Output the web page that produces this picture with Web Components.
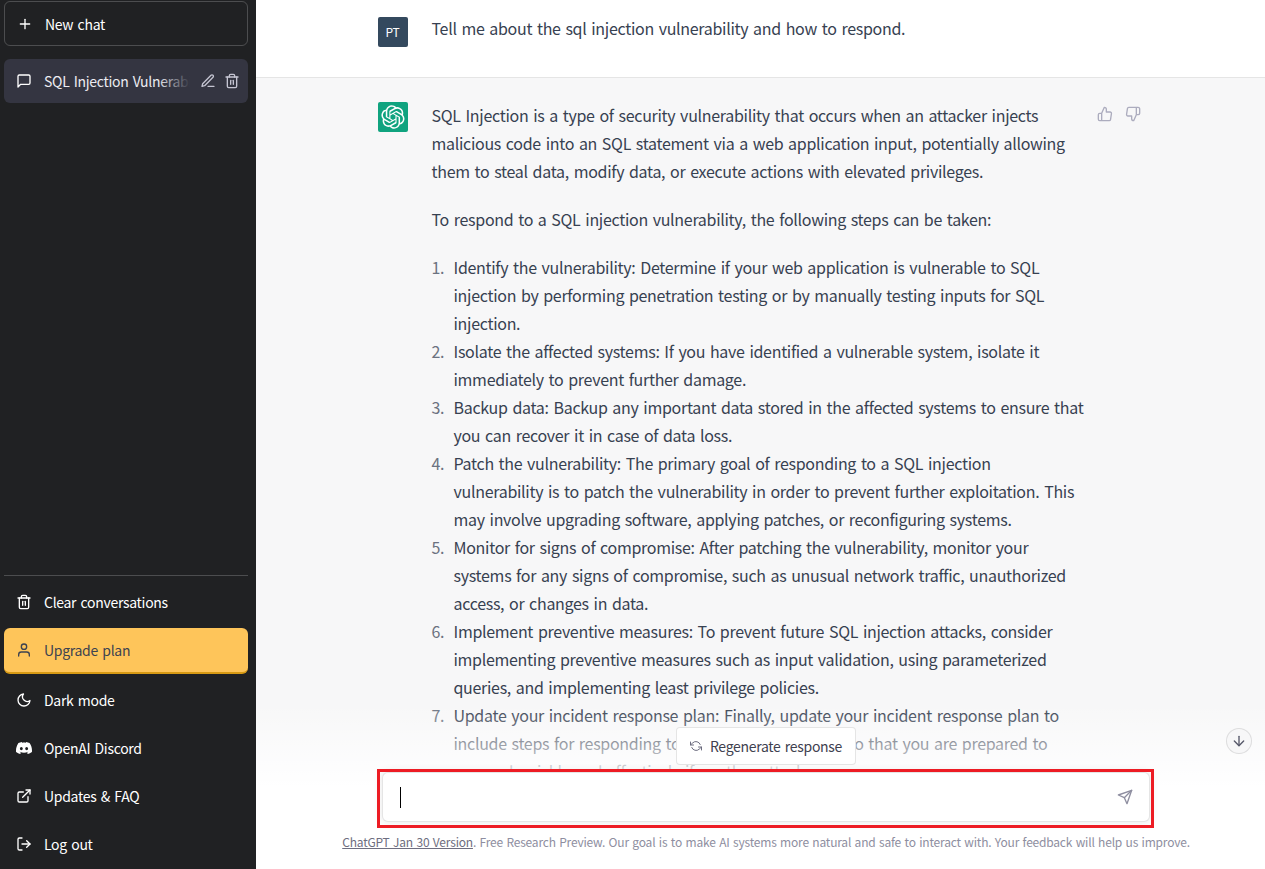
<!DOCTYPE html>
<html lang="en"><head><meta charset="utf-8"><title>ChatGPT</title>
<style>
html,body{margin:0;height:100%;overflow:hidden;background:#fff}
body{font-family:"Noto Sans CJK KR","Noto Sans",sans-serif;letter-spacing:-.3px;word-spacing:1.5px}
app-shell{height:869px}
</style></head><body>
<app-shell>
  <side-bar slot="side">
    <side-new></side-new>
    <side-chat>SQL Injection Vulnerability</side-chat>
    <side-spacer></side-spacer>
    <side-item icon="trash">Clear conversations</side-item>
    <side-item icon="user" variant="gold">Upgrade plan</side-item>
    <side-item icon="moon">Dark mode</side-item>
    <side-item icon="discord">OpenAI Discord</side-item>
    <side-item icon="link">Updates &amp; FAQ</side-item>
    <side-item icon="logout">Log out</side-item>
  </side-bar>
  <chat-main slot="main">
    <chat-msg who="user">Tell me about the sql injection vulnerability and how to respond.</chat-msg>
    <chat-msg who="bot">
      <p>SQL Injection is a type of security vulnerability that occurs when an attacker injects malicious code into an SQL statement via a web application input, potentially allowing them to steal data, modify data, or execute actions with elevated privileges.</p>
      <p>To respond to a SQL injection vulnerability, the following steps can be taken:</p>
      <step-item n="1">Identify the vulnerability: Determine if your web application is vulnerable to SQL injection by performing penetration testing or by manually testing inputs for SQL injection.</step-item>
      <step-item n="2">Isolate the affected systems: If you have identified a vulnerable system, isolate it immediately to prevent further damage.</step-item>
      <step-item n="3">Backup data: Backup any important data stored in the affected systems to ensure that you can recover it in case of data loss.</step-item>
      <step-item n="4">Patch the vulnerability: The primary goal of responding to a SQL injection<br>vulnerability is to patch the vulnerability in order to prevent further exploitation. This may involve upgrading software, applying patches, or reconfiguring systems.</step-item>
      <step-item n="5">Monitor for signs of compromise: After patching the vulnerability, monitor your systems for any signs of compromise, such as unusual network traffic, unauthorized access, or changes in data.</step-item>
      <step-item n="6">Implement preventive measures: To prevent future SQL injection attacks, consider implementing preventive measures such as input validation, using parameterized queries, and implementing least privilege policies.</step-item>
      <step-item n="7">Update your incident response plan: Finally, update your incident response plan to include steps for responding to SQL injection attacks, so that you are prepared to respond quickly and effectively if another attack occurs.</step-item>
    </chat-msg>
  </chat-main>
</app-shell>
<script>
const S=(inner,size=16,extra='')=>`<svg viewBox="0 0 24 24" width="${size}" height="${size}" fill="none" stroke="currentColor" stroke-width="2" stroke-linecap="round" stroke-linejoin="round" ${extra}>${inner}</svg>`;
const ICONS={
 plus:'<line x1="12" y1="5" x2="12" y2="19"/><line x1="5" y1="12" x2="19" y2="12"/>',
 msg:'<path d="M21 15a2 2 0 0 1-2 2H7l-4 4V5a2 2 0 0 1 2-2h14a2 2 0 0 1 2 2z"/>',
 edit:'<path d="M12 20h9"/><path d="M16.5 3.5a2.121 2.121 0 0 1 3 3L7 19l-4 1 1-4L16.5 3.5z"/>',
 trash:'<polyline points="3 6 5 6 21 6"/><path d="M19 6v14a2 2 0 0 1-2 2H7a2 2 0 0 1-2-2V6m3 0V4a2 2 0 0 1 2-2h4a2 2 0 0 1 2 2v2"/><line x1="10" y1="11" x2="10" y2="17"/><line x1="14" y1="11" x2="14" y2="17"/>',
 user:'<path d="M20 21v-2a4 4 0 0 0-4-4H8a4 4 0 0 0-4 4v2"/><circle cx="12" cy="7" r="4"/>',
 moon:'<path d="M21 12.79A9 9 0 1 1 11.21 3 7 7 0 0 0 21 12.79z"/>',
 link:'<path d="M18 13v6a2 2 0 0 1-2 2H5a2 2 0 0 1-2-2V8a2 2 0 0 1 2-2h6"/><polyline points="15 3 21 3 21 9"/><line x1="10" y1="14" x2="21" y2="3"/>',
 logout:'<path d="M9 21H5a2 2 0 0 1-2-2V5a2 2 0 0 1 2-2h4"/><polyline points="16 17 21 12 16 7"/><line x1="21" y1="12" x2="9" y2="12"/>',
 discord:'<path fill="currentColor" stroke="none" d="M20.317 4.3698a19.7913 19.7913 0 00-4.8851-1.5152.0741.0741 0 00-.0785.0371c-.211.3753-.4447.8648-.6083 1.2495-1.8447-.2762-3.68-.2762-5.4868 0-.1636-.3933-.4058-.8742-.6177-1.2495a.077.077 0 00-.0785-.037 19.7363 19.7363 0 00-4.8852 1.515.0699.0699 0 00-.0321.0277C.5334 9.0458-.319 13.5799.0992 18.0578a.0824.0824 0 00.0312.0561c2.0528 1.5076 4.0413 2.4228 5.9929 3.0294a.0777.0777 0 00.0842-.0276c.4616-.6304.8731-1.2952 1.226-1.9942a.076.076 0 00-.0416-.1057c-.6528-.2476-1.2743-.5495-1.8722-.8923a.077.077 0 01-.0076-.1277c.1258-.0943.2517-.1923.3718-.2914a.0743.0743 0 01.0776-.0105c3.9278 1.7933 8.18 1.7933 12.0614 0a.0739.0739 0 01.0785.0095c.1202.099.246.1981.3728.2924a.077.077 0 01-.0066.1276 12.2986 12.2986 0 01-1.873.8914.0766.0766 0 00-.0407.1067c.3604.698.7719 1.3628 1.225 1.9932a.076.076 0 00.0842.0286c1.961-.6067 3.9495-1.5219 6.0023-3.0294a.077.077 0 00.0313-.0552c.5004-5.177-.8382-9.6739-3.5485-13.6604a.061.061 0 00-.0312-.0286zM8.02 15.3312c-1.1825 0-2.1569-1.0857-2.1569-2.419 0-1.3332.9555-2.4189 2.157-2.4189 1.2108 0 2.1757 1.0952 2.1568 2.419 0 1.3332-.9555 2.4189-2.1569 2.4189zm7.9748 0c-1.1825 0-2.1569-1.0857-2.1569-2.419 0-1.3332.9554-2.4189 2.1569-2.4189 1.2108 0 2.1757 1.0952 2.1568 2.419 0 1.3332-.946 2.4189-2.1568 2.4189Z"/>',
 up:'<path d="M14 9V5a3 3 0 0 0-3-3l-4 9v11h11.28a2 2 0 0 0 2-1.7l1.38-9a2 2 0 0 0-2-2.3zM7 22H4a2 2 0 0 1-2-2v-7a2 2 0 0 1 2-2h3"/>',
 down:'<path d="M10 15v4a3 3 0 0 0 3 3l4-9V2H5.72a2 2 0 0 0-2 1.7l-1.38 9a2 2 0 0 0 2 2.3zm7-13h2.67A2.31 2.31 0 0 1 22 4v7a2.31 2.31 0 0 1-2.33 2H17"/>',
 refresh:'<polyline points="1 4 1 10 7 10"/><polyline points="23 20 23 14 17 14"/><path d="M20.49 9A9 9 0 0 0 5.64 5.64L1 10m22 4l-4.64 4.36A9 9 0 0 1 3.51 15"/>',
 send:'<line x1="22" y1="2" x2="11" y2="13"/><polygon points="22 2 15 22 11 13 2 9 22 2"/>',
 arrow:'<line x1="12" y1="5" x2="12" y2="19"/><polyline points="19 12 12 19 5 12"/>'
};
const LOGO='M37.5324 16.8707C37.9808 15.5241 38.1363 14.0974 37.9886 12.6859C37.8409 11.2744 37.3934 9.91076 36.676 8.68622C35.6126 6.83404 33.9882 5.3676 32.0373 4.4985C30.0864 3.62941 27.9098 3.40259 25.8215 3.85078C24.8796 2.7893 23.7219 1.94125 22.4257 1.36341C21.1295 0.785575 19.7249 0.491269 18.3058 0.500197C16.1708 0.495044 14.0893 1.16803 12.3614 2.42214C10.6335 3.67624 9.34853 5.44666 8.6917 7.47815C7.30085 7.76286 5.98686 8.3414 4.8377 9.17505C3.68854 10.0087 2.73073 11.0782 2.02839 12.312C0.956464 14.1591 0.498905 16.2988 0.721698 18.4228C0.944492 20.5467 1.83612 22.5449 3.268 24.1293C2.81966 25.4759 2.66413 26.9026 2.81182 28.3141C2.95951 29.7256 3.40701 31.0892 4.12437 32.3138C5.18791 34.1659 6.8123 35.6322 8.76321 36.5013C10.7141 37.3704 12.8907 37.5973 14.9789 37.1492C15.9208 38.2107 17.0786 39.0587 18.3747 39.6366C19.6709 40.2144 21.0755 40.5087 22.4946 40.4998C24.6307 40.5054 26.7133 39.8321 28.4418 38.5772C30.1704 37.3223 31.4556 35.5506 32.1119 33.5179C33.5027 33.2332 34.8167 32.6547 35.9659 31.821C37.115 30.9874 38.0728 29.9178 38.7752 28.684C39.8458 26.8371 40.3023 24.6979 40.0789 22.5748C39.8556 20.4517 38.9639 18.4544 37.5324 16.8707ZM22.4978 37.8849C20.7443 37.8874 19.0459 37.2733 17.6994 36.1501C17.7601 36.117 17.8666 36.0586 17.936 36.0161L25.9004 31.4156C26.1003 31.3019 26.2663 31.137 26.3813 30.9378C26.4964 30.7386 26.5563 30.5124 26.5549 30.2825V19.0542L29.9213 20.998C29.9389 21.0068 29.9541 21.0198 29.9656 21.0359C29.977 21.052 29.9842 21.0707 29.9867 21.0902V30.3889C29.9842 32.375 29.1946 34.2791 27.7909 35.6841C26.3872 37.0892 24.4838 37.8806 22.4978 37.8849ZM6.39227 31.0064C5.51397 29.4888 5.19742 27.7107 5.49804 25.9832C5.55718 26.0187 5.66048 26.0818 5.73461 26.1244L13.699 30.7248C13.8975 30.8408 14.1233 30.902 14.3532 30.902C14.583 30.902 14.8088 30.8408 15.0073 30.7248L24.731 25.1103V28.9979C24.7321 29.0177 24.7283 29.0376 24.7199 29.0556C24.7115 29.0736 24.6988 29.0893 24.6829 29.1012L16.6317 33.7497C14.9096 34.7416 12.8643 35.0097 10.9447 34.4954C9.02506 33.9811 7.38785 32.7263 6.39227 31.0064ZM4.29707 13.6194C5.17156 12.0998 6.55279 10.9364 8.19885 10.3327C8.19885 10.4013 8.19491 10.5228 8.19491 10.6071V19.808C8.19351 20.0378 8.25334 20.2638 8.36823 20.4629C8.48312 20.6619 8.64893 20.8267 8.84863 20.9404L18.5723 26.5542L15.206 28.4979C15.1894 28.5089 15.1703 28.5155 15.1505 28.5173C15.1307 28.5191 15.1107 28.516 15.0924 28.5082L7.04046 23.8557C5.32135 22.8601 4.06716 21.2235 3.55289 19.3046C3.03862 17.3858 3.30624 15.3413 4.29707 13.6194ZM31.955 20.0556L22.2312 14.4411L25.5976 12.4981C25.6142 12.4872 25.6333 12.4805 25.6531 12.4787C25.6729 12.4769 25.6928 12.4801 25.7111 12.4879L33.7631 17.1364C34.9967 17.849 36.0017 18.8982 36.6606 20.1613C37.3194 21.4244 37.6047 22.849 37.4832 24.2684C37.3617 25.6878 36.8382 27.0432 35.9743 28.1759C35.1103 29.3086 33.9415 30.1717 32.6047 30.6641C32.6047 30.5947 32.6047 30.4733 32.6047 30.3889V21.188C32.6066 20.9586 32.5474 20.7328 32.4332 20.5338C32.319 20.3348 32.154 20.1698 31.955 20.0556ZM35.3055 15.0128C35.2464 14.9765 35.1431 14.9142 35.069 14.8717L27.1045 10.2712C26.906 10.1554 26.6803 10.0943 26.4504 10.0943C26.2206 10.0943 25.9948 10.1554 25.7963 10.2712L16.0726 15.8858V11.9982C16.0715 11.9783 16.0753 11.9585 16.0837 11.9405C16.0921 11.9225 16.1048 11.9068 16.1207 11.8949L24.1719 7.25025C25.4053 6.53903 26.8121 6.19376 28.2308 6.25482C29.6496 6.31589 31.0213 6.78077 32.1856 7.59508C33.3499 8.40939 34.2584 9.53945 34.8048 10.8498C35.3513 12.1602 35.5131 13.5971 35.2713 14.9965L35.3055 15.0128ZM14.2424 21.9419L10.8752 19.9981C10.8576 19.9893 10.8423 19.9763 10.8309 19.9602C10.8195 19.9441 10.8122 19.9254 10.8098 19.9058V10.6071C10.8107 9.18295 11.2173 7.78848 11.9819 6.58696C12.7466 5.38544 13.8377 4.42659 15.1275 3.82264C16.4173 3.21869 17.8524 2.99464 19.2649 3.1767C20.6775 3.35876 22.0089 3.93941 23.1034 4.85067C23.0427 4.88379 22.937 4.94215 22.8668 4.98473L14.9024 9.58517C14.7025 9.69878 14.5366 9.86356 14.4215 10.0626C14.3065 10.2616 14.2466 10.4877 14.2479 10.7175L14.2424 21.9419ZM16.071 17.9991L20.4018 15.4978L24.7325 17.9975V22.9985L20.4018 25.4983L16.071 22.9985V17.9991Z';
const def=(name,css,html)=>{
 customElements.define(name,class extends HTMLElement{
  constructor(){super();this.attachShadow({mode:'open'})}
  connectedCallback(){this.shadowRoot.innerHTML=`<style>${css}</style>`+(typeof html==='function'?html(this):html)}
 });
};
def('app-shell',':host{display:flex;width:100%;overflow:hidden;position:relative}','<slot name="side"></slot><slot name="main"></slot>');
def('side-bar',':host{display:flex;flex-direction:column;width:256px;flex:none;height:869px;box-sizing:border-box;background:#202123;padding:1px 8px 2px 4px;color:#fff;font-size:14px}','<slot></slot>');
def('side-new',':host{display:flex;align-items:center;gap:12px;height:45px;box-sizing:border-box;border:1px solid rgba(255,255,255,.2);border-radius:6px;padding-left:12px;padding-top:1px;margin-bottom:13px;flex:none}svg{display:block}',()=>S(ICONS.plus)+'<span>New chat</span>');
def('side-chat',':host{display:flex;align-items:center;height:44px;box-sizing:border-box;background:#343541;border-radius:6px;padding-left:12px;position:relative;flex:none}svg{display:block;flex:none}.t{margin-left:12px;width:146px;white-space:nowrap;overflow:hidden;position:relative;color:#ececf1}.t::after{content:"";position:absolute;right:0;top:0;bottom:0;width:32px;background:linear-gradient(to left,#343541,rgba(52,53,65,0))}.a{display:flex;gap:8px;margin-left:10px;color:#c5c5d2}',()=>S(ICONS.msg)+'<div class="t"><slot></slot></div><div class="a">'+S(ICONS.edit)+S(ICONS.trash)+'</div>');
def('side-spacer',':host{display:block;flex:1;border-bottom:1px solid rgba(255,255,255,.2)}','');
customElements.define('side-item',class extends HTMLElement{
 constructor(){super();this.attachShadow({mode:'open'})}
 connectedCallback(){
  const gold=this.getAttribute('variant')==='gold';
  const ic=this.getAttribute('icon');
  const mt=ic==='trash'?5:gold?3:ic==='moon'?5:4;
  this.shadowRoot.innerHTML=`<style>:host{display:flex;align-items:center;gap:12px;height:${gold?46:44}px;box-sizing:border-box;padding-left:12px;border-radius:6px;flex:none;margin-top:${mt}px;${gold?'background:#fec55a;border-bottom:2px solid #d79a14;color:#3d4350;':'color:#fff;padding-bottom:2px;'}}svg{display:block;flex:none}</style>${S(ICONS[ic])}<span><slot></slot></span>`;
 }
});
customElements.define('step-item',class extends HTMLElement{
 constructor(){super();this.attachShadow({mode:'open'})}
 connectedCallback(){
  this.shadowRoot.innerHTML=`<style>:host{display:grid;grid-template-columns:22px 1fr}.n{color:#6b7280}</style><span class="n">${this.getAttribute('n')}.</span><span><slot></slot></span>`;
 }
});
def('chat-main',':host{display:block;flex:1;height:869px;position:relative;overflow:hidden;background:#fff}',()=>`<style>
.fade{position:absolute;left:0;right:0;bottom:0;height:165px;background:linear-gradient(to top,#fff 0,#fff 50%,rgba(255,255,255,0) 100%);pointer-events:none}
.regen{position:absolute;left:420px;top:727px;width:180px;height:38px;box-sizing:border-box;display:flex;align-items:center;justify-content:center;gap:8px;background:#fff;border:1px solid rgba(0,0,0,.1);border-radius:4px;font-size:14px;color:#40414f}
.regen svg{color:#6e6e80}
.input{position:absolute;left:126px;top:772px;width:768px;height:50px;box-sizing:border-box;background:#fff;border:1px solid rgba(0,0,0,.1);border-radius:6px;box-shadow:0 0 10px rgba(0,0,0,.1);display:flex;align-items:center;justify-content:space-between;padding:0 16px}
.caret{width:1px;height:21px;background:#000;margin-top:1px;margin-left:1px}
.input svg{color:#8e8ea0;display:block}
.ring{position:absolute;left:121px;top:769px;width:777px;height:59px;box-sizing:border-box;border:3px solid #ed1c24;pointer-events:none}
.foot{position:absolute;left:0;right:0;top:833px;height:18px;line-height:18px;text-align:center;font-size:12px;color:#8e8ea0;padding-left:11px;white-space:nowrap;letter-spacing:-.2px;word-spacing:1px}
.foot u{color:#6e6e80}
.down{position:absolute;left:970px;top:728px;width:26px;height:26px;box-sizing:border-box;border:1px solid rgba(0,0,0,.1);border-radius:50%;display:flex;align-items:center;justify-content:center;background:#f7f7f8;color:#565869}
</style><slot></slot><div class="fade"></div>
<div class="regen">${S(ICONS.refresh,12)}<span>Regenerate response</span></div>
<div class="down">${S(ICONS.arrow,16)}</div>
<div class="input"><div class="caret"></div>${S(ICONS.send,16)}</div>
<div class="ring"></div>
<div class="foot"><u>ChatGPT Jan 30 Version</u>. Free Research Preview. Our goal is to make AI systems more natural and safe to interact with. Your feedback will help us improve.</div>`);
customElements.define('chat-msg',class extends HTMLElement{
 constructor(){super();this.attachShadow({mode:'open'})}
 connectedCallback(){
  const bot=this.getAttribute('who')==='bot';
  this.shadowRoot.innerHTML=`<style>
:host{display:block;box-sizing:border-box;font-size:16px;line-height:28px;color:#374151;${bot?'background:#f7f7f8;padding:23px 0 200px;':'background:#fff;padding:14px 0 30px;border-bottom:1px solid rgba(0,0,0,.1);'}}
.row{display:flex;width:768px;margin:0 auto;position:relative;left:1px}
.av{width:30px;height:30px;flex:none;border-radius:2px;display:flex;align-items:center;justify-content:center;color:#fff;margin-right:24px;${bot?'background:#10a37f;margin-top:1px;':'background:#34495e;font-size:12px;margin-top:3px;'}}
.tx{width:656px;flex:none}
.thumbs{display:flex;gap:12px;color:#acacbe;margin-left:9px;height:16px;padding-top:5px}
svg{display:block}
::slotted(p){margin:0 0 20px}
</style><div class="row"><div class="av">${bot?`<svg width="24" height="24" viewBox="0 0 41 41"><path fill="#fff" d="${LOGO}"/></svg>`:'PT'}</div><div class="tx"><slot></slot></div>${bot?`<div class="thumbs">${S(ICONS.up)}${S(ICONS.down)}</div>`:''}</div>`;
 }
});
</script>
</body></html>
